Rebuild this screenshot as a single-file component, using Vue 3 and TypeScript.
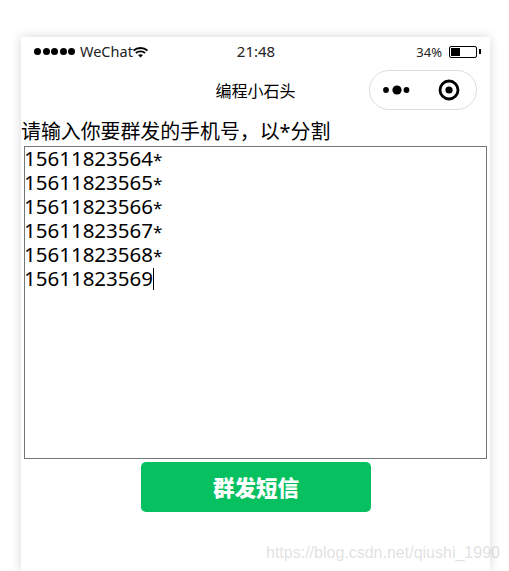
<script setup lang="ts">
const lines: string[] = ['15611823564', '15611823565', '15611823566', '15611823567', '15611823568']
const last = '15611823569'
</script>

<template>
  <div class="page">
    <div class="phone">
      <div class="status">
        <div class="status-left">
          <span class="dots"><i v-for="n in 5" :key="n"></i></span>
          <span class="carrier">WeChat</span>
          <svg class="wifi" width="15" height="11" viewBox="0 0 15 11">
            <path d="M0.6 3.6C4.4 0.2 10.6 0.2 14.4 3.6" fill="none" stroke="#000" stroke-width="1.9" />
            <path d="M2.9 6C5.4 3.8 9.6 3.8 12.1 6" fill="none" stroke="#000" stroke-width="1.9" />
            <path d="M5 8.1C6.4 7 8.6 7 10 8.1L7.5 10.6Z" fill="#000" />
          </svg>
        </div>
        <div class="time">21:48</div>
        <div class="status-right">
          <span class="pct">34%</span>
          <span class="battery"><b></b></span>
          <span class="nub"></span>
        </div>
      </div>
      <div class="nav">
        <span class="title">编程小石头</span>
        <div class="capsule">
          <svg width="32" height="14" viewBox="0 0 32 14">
            <circle cx="5" cy="7" r="2.9" fill="#000" />
            <circle cx="16" cy="7" r="4.6" fill="#000" />
            <circle cx="25.5" cy="7" r="2.9" fill="#000" />
          </svg>
          <svg width="22" height="22" viewBox="0 0 22 22">
            <circle cx="11" cy="11" r="9" fill="none" stroke="#000" stroke-width="2.8" />
            <circle cx="11" cy="11" r="3.6" fill="#000" />
          </svg>
        </div>
      </div>
      <div class="label">请输入你要群发的手机号，以*分割</div>
      <div class="area">
        <div class="lines">
          <div v-for="line in lines" :key="line" class="line">{{ line }}<span class="star">*</span></div>
          <div class="line">{{ last }}<span class="caret"></span></div>
        </div>
      </div>
      <button class="send" type="button">群发短信</button>
    </div>
    <div class="watermark">https://blog.csdn.net/qiushi_1990</div>
  </div>
</template>

<style scoped>
.page {
  position: relative;
  height: 571px;
  box-sizing: border-box;
  padding: 37px 19px 0 21px;
  background: #fff;
  overflow: hidden;
  font-family: "Noto Sans", "Noto Sans CJK SC", sans-serif;
  color: #000;
}
.phone {
  height: 534px;
  background: #fff;
  box-shadow: 0 0 10px rgba(0, 0, 0, 0.16);
  display: flex;
  flex-direction: column;
}
.status {
  height: 29px;
  padding: 0 9px 0 13px;
  display: grid;
  grid-template-columns: 1fr auto 1fr;
  align-items: center;
  font-size: 14.5px;
  color: #222;
}
.status-left {
  display: flex;
  align-items: center;
}
.dots {
  display: flex;
  gap: 1.5px;
  margin-right: 5px;
}
.dots i {
  width: 7px;
  height: 7px;
  border-radius: 50%;
  background: #000;
}
.carrier {
  line-height: 1;
}
.wifi {
  margin-top: 1px;
}
.time {
  margin: 0 0 1px -3px;
  font-size: 15px;
}
.status-right {
  display: flex;
  align-items: center;
  justify-content: flex-end;
  font-size: 13px;
}
.pct {
  margin-right: 7px;
}
.battery {
  box-sizing: border-box;
  width: 28px;
  height: 12px;
  border: 1px solid #000;
  border-radius: 2px;
  padding: 1px;
  display: flex;
}
.battery b {
  width: 9px;
  background: #000;
}
.nub {
  width: 2px;
  height: 5px;
  margin-left: 2px;
  background: #000;
}
.nav {
  position: relative;
  height: 55px;
  display: flex;
  align-items: center;
  justify-content: center;
  padding-bottom: 5px;
  box-sizing: border-box;
}
.title {
  font-size: 16px;
  margin-top: -3px;
}
.capsule {
  position: absolute;
  top: 4px;
  left: 348px;
  box-sizing: border-box;
  width: 108px;
  height: 40px;
  border: 1px solid #ddd;
  border-radius: 20px;
  display: flex;
  align-items: center;
  justify-content: space-between;
  padding: 0 16px 0 11px;
}
.label {
  height: 25px;
  font-size: 19.9px;
  line-height: 21px;
  white-space: nowrap;
}
.area {
  box-sizing: border-box;
  width: 463px;
  height: 313px;
  margin-left: 3px;
  border: 1px solid #767676;
  font-size: 20.5px;
}
.lines {
  margin: -1.5px 0 0 -1px;
}
.line {
  white-space: nowrap;
  height: 24px;
  line-height: 24px;
}
.star {
  font-size: 17px;
}
.caret {
  display: inline-block;
  width: 1px;
  height: 22px;
  background: #000;
  vertical-align: -4px;
}
.send {
  display: block;
  width: 230px;
  height: 50px;
  margin: 3px 0 0 120px;
  padding: 0 0 2px;
  border: 0;
  border-radius: 5px;
  background: #07c160;
  color: #fff;
  font-family: inherit;
  font-size: 21.5px;
  font-weight: 900;
}
.watermark {
  position: absolute;
  left: 266px;
  top: 543px;
  font-family: "Liberation Sans", sans-serif;
  font-size: 16px;
  line-height: 20px;
  color: rgba(150, 150, 150, 0.3);
  white-space: nowrap;
}
</style>
